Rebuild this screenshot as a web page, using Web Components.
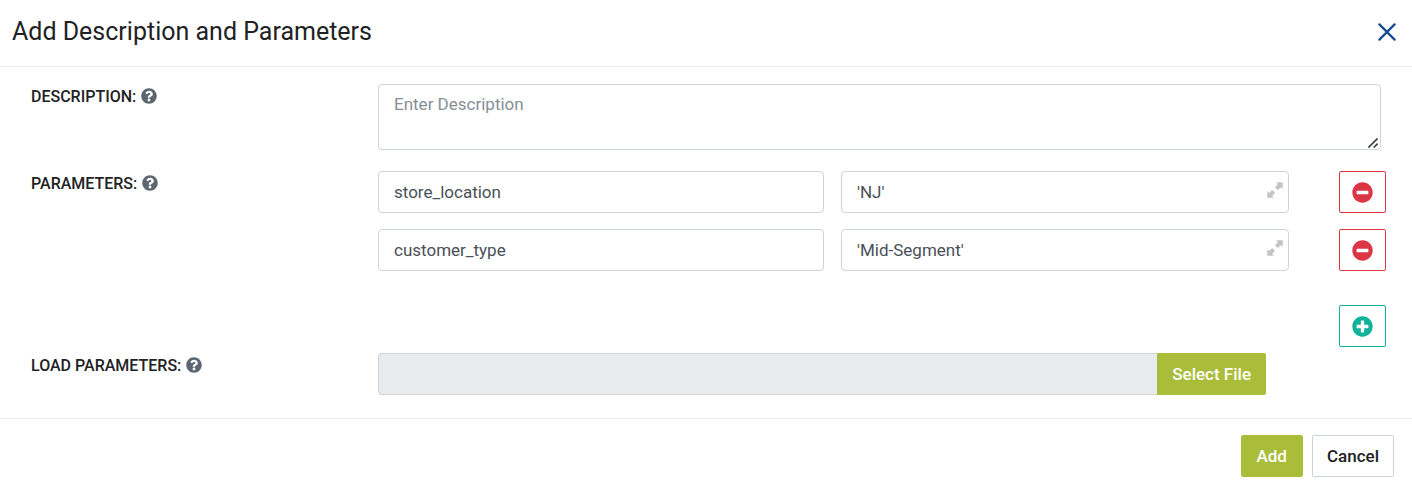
<!DOCTYPE html>
<html lang="en">
<head>
<meta charset="utf-8">
<title>Add Description and Parameters</title>
<style>
  body { margin: 0; background: #fff; color: #212224; font: 17px/26px Roboto, sans-serif; }
</style>
</head>
<body>
<param-dialog></param-dialog>
<script>
const define = (name, html, setup) => {
  const template = document.createElement('template');
  template.innerHTML = html;
  customElements.define(name, class extends HTMLElement {
    connectedCallback() {
      if (this.shadowRoot) return;
      const root = this.attachShadow({ mode: 'open' });
      root.append(template.content.cloneNode(true));
      if (setup) setup(this, root);
    }
  });
};

const icons = {
  help: '<path d="M504 256c0 137-111 248-248 248S8 393 8 256C8 119.100 119 8 256 8s248 111.100 248 248zM262.655 90c-54.497 0-89.255 22.957-116.549 63.758-3.536 5.286-2.353 12.415 2.715 16.258l34.699 26.310c5.205 3.947 12.621 3.008 16.665-2.122 17.864-22.658 30.113-35.797 57.303-35.797 20.429 0 45.698 13.148 45.698 32.958 0 14.976-12.363 22.667-32.534 33.976C247.128 238.528 216 254.941 216 296v4c0 6.627 5.373 12 12 12h56c6.627 0 12-5.373 12-12v-1.333c0-28.462 83.186-29.647 83.186-106.667 0-58.002-60.165-102-116.531-102zM256 338c-25.365 0-46 20.635-46 46 0 25.364 20.635 46 46 46s46-20.636 46-46c0-25.365-20.635-46-46-46z"/>',
  minus: '<path d="M256 8C119 8 8 119 8 256s111 248 248 248 248-111 248-248S393 8 256 8zM124 296c-6.600 0-12-5.400-12-12v-56c0-6.600 5.400-12 12-12h264c6.600 0 12 5.400 12 12v56c0 6.600-5.400 12-12 12H124z"/>',
  plus: '<path d="M256 8C119 8 8 119 8 256s111 248 248 248 248-111 248-248S393 8 256 8zm144 276c0 6.600-5.400 12-12 12h-92v92c0 6.600-5.400 12-12 12h-56c-6.600 0-12-5.400-12-12v-92h-92c-6.600 0-12-5.400-12-12v-56c0-6.600 5.400-12 12-12h92v-92c0-6.600 5.400-12 12-12h56c6.600 0 12 5.400 12 12v92h92c6.600 0 12 5.400 12 12v56z"/>',
  close: '<path d="M40 40L472 472M472 40L40 472" fill="none" stroke="currentColor" stroke-width="66" stroke-linecap="round"/>',
  grip: '<path d="M20 492L492 20M290 492L492 290" fill="none" stroke="currentColor" stroke-width="84"/>',
  expand: '<path d="M290 8H490Q504 8 504 22V222L446 164L346 258L254 166L348 66ZM222 504H22Q8 504 8 490V290L66 348L166 254L258 346L164 446Z"/>'
};

define('app-icon', `
  <style>
    :host { display: inline-flex; flex: none; width: var(--icon-size, 16px); height: var(--icon-size, 16px); }
    svg { width: 100%; height: 100%; fill: currentColor; }
  </style>
  <svg viewBox="0 0 512 512" aria-hidden="true"></svg>`,
  (host, root) => { root.querySelector('svg').innerHTML = icons[host.getAttribute('name')]; });

define('app-button', `
  <style>
    :host { display: block; }
    button { display: flex; align-items: center; justify-content: center; box-sizing: border-box; width: 100%; height: 42px;
      margin: 0; padding: 0 15px; border: 1px solid #a9bd3a; border-radius: 2px; background: #a9bd3a; color: #fff;
      font: inherit; font-weight: 500; cursor: pointer; }
    :host([kind="plain"]) button { padding: 0 14px; background: #fff; border-color: #ced4da; color: #212224; }
    :host([kind="remove"]) button { padding: 0; background: #fff; border-color: #dc3545; color: #dc3545; }
    :host([kind="insert"]) button { padding: 0; background: #fff; border-color: #11b29a; color: #11b29a; }
    :host([joined]) button { padding: 0 14px; border-radius: 0 2px 2px 0; }
  </style>
  <button type="button"><slot></slot></button>`,
  (host, root) => {
    const label = host.getAttribute('label');
    if (label) root.querySelector('button').setAttribute('aria-label', label);
  });

define('form-row', `
  <style>
    :host { display: grid; grid-template-columns: minmax(0, 347fr) minmax(0, 1008fr); align-items: start; }
    .name { display: flex; align-items: center; gap: 5px; font-weight: 500; font-size: 16px; --icon-size: 16px; }
    app-icon { color: #5c6670; margin-bottom: 2px; }
  </style>
  <div class="name"><slot name="label"></slot><app-icon name="help"></app-icon></div>
  <slot></slot>`);

define('param-row', `
  <style>
    :host { display: grid; grid-template-columns: minmax(0, 446fr) minmax(0, 515fr) 47px; }
    input { box-sizing: border-box; width: 100%; height: 42px; margin: 0; padding: 0 15px; border: 1px solid #ced4da;
      border-radius: 4px; background: #fff; color: #495057; font: inherit; }
    .value { position: relative; margin: 0 50px 0 17px; }
    .value input { padding-right: 32px; }
    .value button { position: absolute; top: 11px; right: 6px; display: flex; padding: 0; border: 0; background: none; color: #c4c4c4; --icon-size: 16px; }
    app-button { --icon-size: 21px; }
  </style>
  <input class="key" aria-label="Parameter name">
  <div class="value"><input aria-label="Parameter value"><button type="button" aria-label="Expand value"><app-icon name="expand"></app-icon></button></div>
  <app-button kind="remove" label="Remove parameter"><app-icon name="minus"></app-icon></app-button>`,
  (host, root) => {
    root.querySelector('.key').value = host.getAttribute('name');
    root.querySelector('.value input').value = host.getAttribute('value');
  });

define('param-dialog', `
  <style>
    :host { display: block; }
    header { display: flex; align-items: center; justify-content: space-between; box-sizing: border-box; height: 67px;
      padding: 0 16px 3px 12px; border-bottom: 1px solid #e9ecef; }
    h1 { margin: 0; font-size: 25px; line-height: 32px; font-weight: 400; }
    .close { display: flex; padding: 0; border: 0; background: none; color: #1d4b8f; --icon-size: 18px; }
    main { display: grid; row-gap: 21px; padding: 17px 26px 23px 31px; }
    .description { position: relative; margin-right: 5px; }
    textarea { display: block; box-sizing: border-box; width: 100%; height: 66px; margin: 0; padding: 6px 15px;
      border: 1px solid #ced4da; border-radius: 4px; background: #fff; color: #495057; font: inherit; resize: vertical; }
    textarea::placeholder { color: #868e96; opacity: 1; }
    textarea::-webkit-resizer { background: transparent; }
    .grip { position: absolute; right: 3px; bottom: 2px; color: #444; pointer-events: none; --icon-size: 10px; }
    .params { display: grid; row-gap: 16px; }
    .insert { justify-self: end; width: 47px; margin-top: 18px; --icon-size: 21px; }
    .load { margin-top: -15px; }
    .file { display: flex; margin-right: 120px; }
    .file input { box-sizing: border-box; flex: 1; min-width: 0; height: 42px; margin: 0; padding: 0 15px; font: inherit;
      border: 1px solid #ced4da; border-right: 0; border-radius: 4px 0 0 4px; background: #e9ecef; }
    footer { display: flex; justify-content: flex-end; gap: 9px; padding: 16px 18px 11px; border-top: 1px solid #e9ecef; }
  </style>
  <header>
    <h1>Add Description and Parameters</h1>
    <button class="close" type="button" aria-label="Close"><app-icon name="close"></app-icon></button>
  </header>
  <main>
    <form-row>
      <label slot="label" for="description">DESCRIPTION:</label>
      <div class="description"><textarea id="description" placeholder="Enter Description"></textarea><app-icon class="grip" name="grip"></app-icon></div>
    </form-row>
    <form-row>
      <span slot="label" id="params-label">PARAMETERS:</span>
      <div class="params" role="group" aria-labelledby="params-label">
        <param-row name="store_location" value="'NJ'"></param-row>
        <param-row name="customer_type" value="'Mid-Segment'"></param-row>
        <app-button class="insert" kind="insert" label="Add parameter"><app-icon name="plus"></app-icon></app-button>
      </div>
    </form-row>
    <form-row class="load">
      <label slot="label" for="file">LOAD PARAMETERS:</label>
      <div class="file"><input id="file" type="text" readonly><app-button joined>Select File</app-button></div>
    </form-row>
  </main>
  <footer>
    <app-button>Add</app-button>
    <app-button kind="plain">Cancel</app-button>
  </footer>`);
</script>
</body>
</html>
